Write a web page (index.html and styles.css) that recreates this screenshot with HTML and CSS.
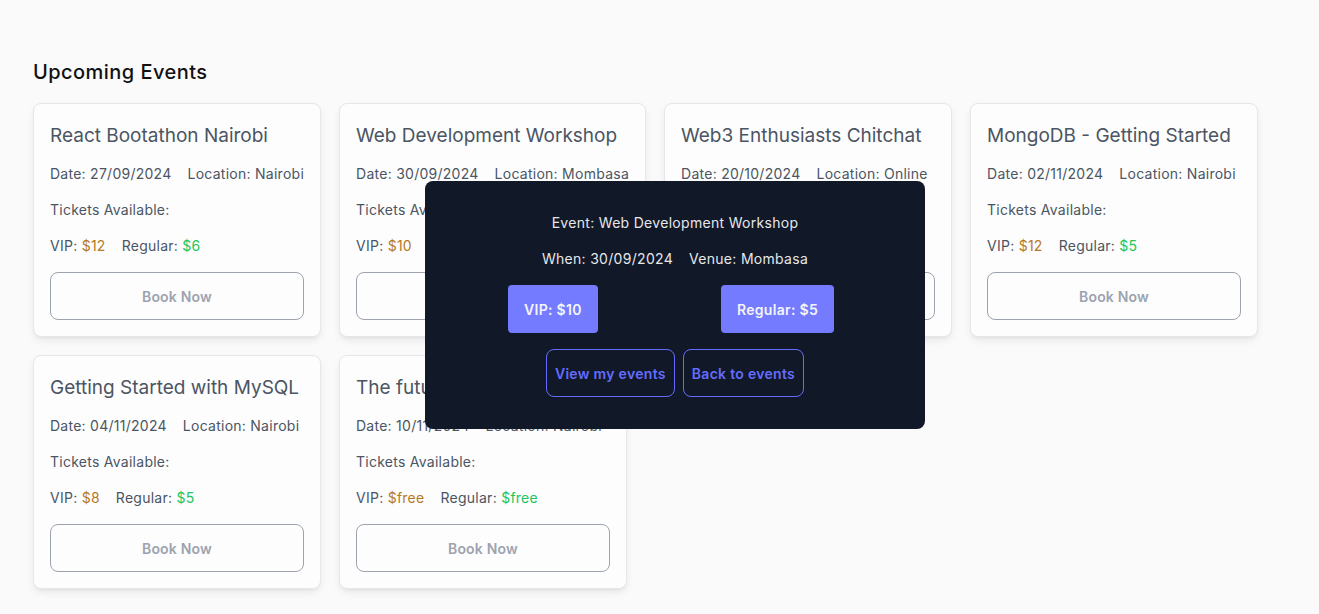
FILE: index.html
```html
<!DOCTYPE html>
<html lang="en">
<head>
<meta charset="utf-8">
<title>Upcoming Events</title>
<link rel="stylesheet" href="styles.css">
</head>
<body>
<main class="page">
  <h2 class="heading">Upcoming Events</h2>
  <section class="grid">
    <article class="card">
      <h3 class="card-title">React Bootathon Nairobi</h3>
      <p class="row"><span>Date: 27/09/2024</span><span>Location: Nairobi</span></p>
      <p class="row">Tickets Available:</p>
      <p class="row"><span>VIP: <span class="vip">$12</span></span><span>Regular: <span class="reg">$6</span></span></p>
      <button class="book">Book Now</button>
    </article>
    <article class="card">
      <h3 class="card-title">Web Development Workshop</h3>
      <p class="row"><span>Date: 30/09/2024</span><span>Location: Mombasa</span></p>
      <p class="row">Tickets Available:</p>
      <p class="row"><span>VIP: <span class="vip">$10</span></span><span>Regular: <span class="reg">$5</span></span></p>
      <button class="book">Book Now</button>
    </article>
    <article class="card">
      <h3 class="card-title">Web3 Enthusiasts Chitchat</h3>
      <p class="row"><span>Date: 20/10/2024</span><span>Location: Online</span></p>
      <p class="row">Tickets Available:</p>
      <p class="row"><span>VIP: <span class="vip">$15</span></span><span>Regular: <span class="reg">$5</span></span></p>
      <button class="book">Book Now</button>
    </article>
    <article class="card">
      <h3 class="card-title">MongoDB - Getting Started</h3>
      <p class="row"><span>Date: 02/11/2024</span><span>Location: Nairobi</span></p>
      <p class="row">Tickets Available:</p>
      <p class="row"><span>VIP: <span class="vip">$12</span></span><span>Regular: <span class="reg">$5</span></span></p>
      <button class="book">Book Now</button>
    </article>
    <article class="card">
      <h3 class="card-title">Getting Started with MySQL</h3>
      <p class="row"><span>Date: 04/11/2024</span><span>Location: Nairobi</span></p>
      <p class="row">Tickets Available:</p>
      <p class="row"><span>VIP: <span class="vip">$8</span></span><span>Regular: <span class="reg">$5</span></span></p>
      <button class="book">Book Now</button>
    </article>
    <article class="card">
      <h3 class="card-title">The future of AI</h3>
      <p class="row"><span>Date: 10/11/2024</span><span>Location: Nairobi</span></p>
      <p class="row">Tickets Available:</p>
      <p class="row"><span>VIP: <span class="vip">$free</span></span><span>Regular: <span class="reg">$free</span></span></p>
      <button class="book">Book Now</button>
    </article>
  </section>
</main>

<div class="modal">
  <p class="m-line">Event: Web Development Workshop</p>
  <p class="m-line m-pair"><span>When: 30/09/2024</span><span>Venue: Mombasa</span></p>
  <div class="m-tickets">
    <button class="tkt">VIP: $10</button>
    <button class="tkt">Regular: $5</button>
  </div>
  <div class="m-actions">
    <button class="outline">View my events</button>
    <button class="outline">Back to events</button>
  </div>
</div>
</body>
</html>
```
FILE: styles.css
```css
* { box-sizing: border-box; }
html, body { margin: 0; padding: 0; }
body {
  background: #fafafb;
  font-family: "Inter", "Open Sans", sans-serif;
  color: #4b5563;
  min-height: 614px;
}
.page {
  padding: 58px 33px 0 33px;
}
.heading {
  margin: 0 0 17px 0;
  font-size: 20px;
  line-height: 28px;
  font-weight: 500;
  letter-spacing: 0.45px;
  color: #111111;
}
.grid {
  display: flex;
  flex-wrap: wrap;
  gap: 18px;
  width: 1240px;
}
.card {
  min-width: 288px;
  background: #fdfdfd;
  border: 1px solid #e5e7eb;
  border-radius: 8px;
  padding: 16px;
  display: flex;
  flex-direction: column;
  gap: 16px;
  box-shadow: 0 4px 10px -2px rgba(0,0,0,0.10), 0 2px 4px -2px rgba(0,0,0,0.06);
}
.card-title {
  margin: 0 0 -2px 0;
  padding-top: 2px;
  font-size: 19px;
  line-height: 28px;
  font-weight: 400;
  color: #4b5563;
  white-space: nowrap;
}
.row {
  margin: 0;
  font-size: 14px;
  line-height: 20px;
  letter-spacing: 0.26px;
  display: flex;
  gap: 16px;
  white-space: nowrap;
  color: #4b5563;
}
.vip { color: #b7791f; }
.reg { color: #22c55e; }
.book {
  height: 48px;
  width: 100%;
  background: transparent;
  border: 1px solid #9ca3af;
  border-radius: 8px;
  font-family: inherit;
  font-size: 14px;
  font-weight: 600;
  letter-spacing: 0.2px;
  color: #9ca3af;
}
.modal {
  position: absolute;
  left: 425px;
  top: 181px;
  width: 500px;
  height: 248px;
  background: #111827;
  border-radius: 8px;
  padding: 32px 0;
  display: flex;
  flex-direction: column;
  gap: 16px;
  align-items: center;
}
.m-line {
  margin: 0;
  font-size: 14px;
  line-height: 20px;
  letter-spacing: 0.3px;
  color: #e5e7eb;
}
.m-pair { display: flex; gap: 16px; }
.m-tickets {
  align-self: stretch;
  display: flex;
  justify-content: space-between;
  padding: 0 91px 0 83px;
}
.tkt {
  height: 48px;
  padding: 0 16px;
  background: #747bff;
  border: none;
  border-radius: 4px;
  color: #f3f4f6;
  font-family: inherit;
  font-size: 14px;
  font-weight: 600;
  letter-spacing: 0.3px;
}
.m-actions { display: flex; gap: 8px; }
.outline {
  height: 48px;
  padding: 0 8px;
  background: transparent;
  border: 1px solid #646cff;
  border-radius: 8px;
  color: #646cff;
  font-family: inherit;
  font-size: 14px;
  font-weight: 600;
  letter-spacing: 0.3px;
}
```
